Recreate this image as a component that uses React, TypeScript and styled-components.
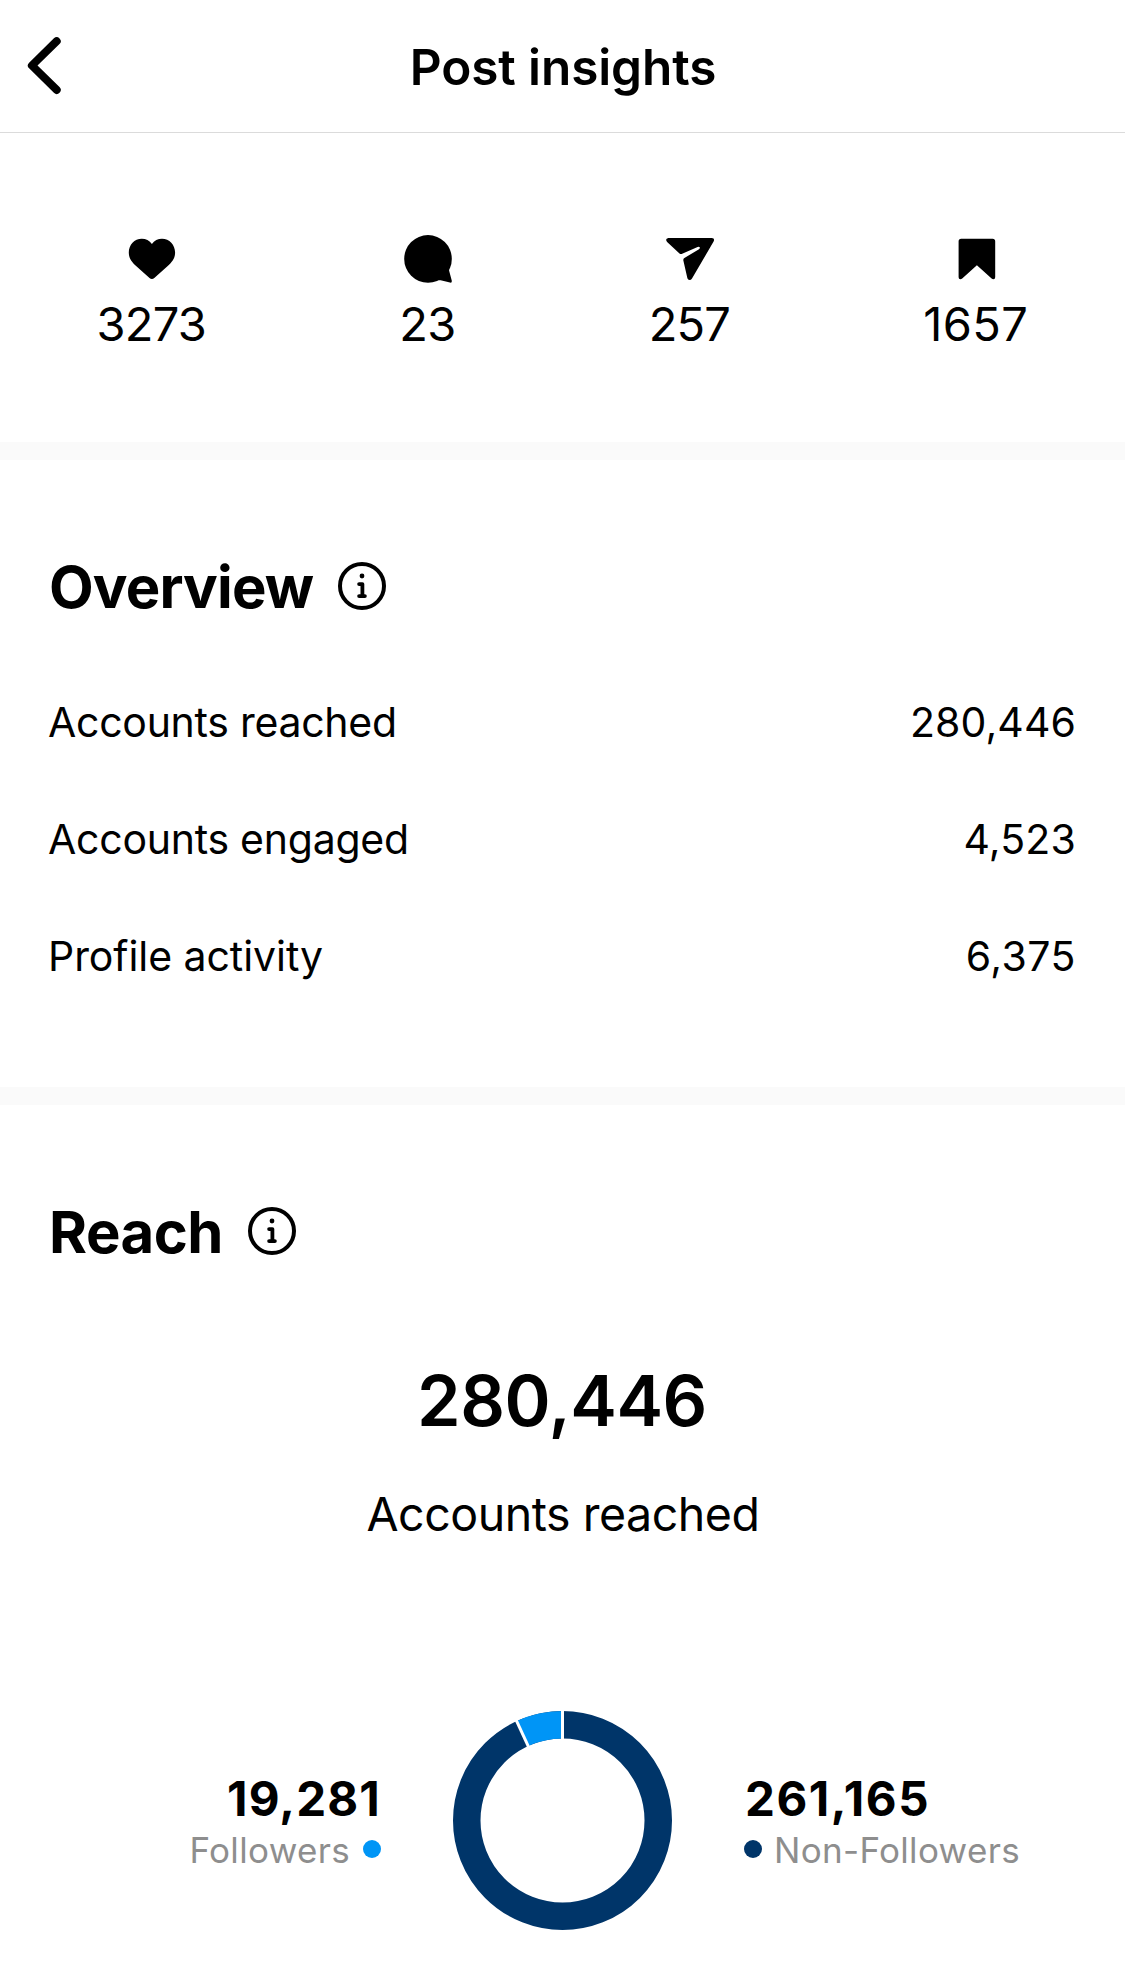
import React from 'react';
import styled, { createGlobalStyle } from 'styled-components';

const GlobalStyle = createGlobalStyle`
  *, *::before, *::after { box-sizing: border-box; }
  body {
    margin: 0;
    background: #fff;
    color: #000;
    font-family: Inter, "Liberation Sans", sans-serif;
  }
`;

const Screen = styled.main`
  display: flex;
  flex-direction: column;
  min-height: 1988px;
  background: #fff;
`;

const Header = styled.header`
  display: grid;
  grid-template-columns: 100px 1fr 100px;
  align-items: center;
  height: 133px;
  border-bottom: 1px solid #dbdbdb;
`;

const BackButton = styled.button`
  display: flex;
  align-items: center;
  padding: 0 0 0 24px;
  border: 0;
  background: none;
  color: inherit;
`;

const PageTitle = styled.h1`
  margin: 0;
  padding: 2px 0 0 1px;
  font-size: 49.5px;
  font-weight: 600;
  line-height: 60px;
  letter-spacing: -0.1px;
  text-align: center;
`;

const Stats = styled.section`
  display: flex;
  justify-content: space-around;
  height: 309px;
  padding-top: 102px;
`;

const Stat = styled.div`
  display: flex;
  flex-direction: column;
  align-items: center;
  gap: 17px;
`;

const StatValue = styled.span<{ $tracking: number }>`
  font-size: 47px;
  line-height: 48px;
  letter-spacing: ${p => p.$tracking}px;
`;

const Icon = styled.svg<{ $size?: number }>`
  display: block;
  flex: none;
  width: ${p => p.$size ?? 48}px;
  height: ${p => p.$size ?? 48}px;
  overflow: visible;
`;

const Divider = styled.div`
  height: 18px;
  background: #fafafa;
`;

const Section = styled.section<{ $bottom?: number }>`
  display: flex;
  flex-direction: column;
  padding: 96px 48px ${p => p.$bottom ?? 0}px 49px;
`;

const SectionHeader = styled.div`
  display: flex;
  align-items: center;
  gap: 25px;
  height: 60px;
`;

const SectionTitle = styled.h2<{ $tracking: number }>`
  margin: 0;
  padding-top: 2px;
  font-size: 58px;
  font-weight: 700;
  line-height: 60px;
  letter-spacing: ${p => p.$tracking}px;
`;

const MetricList = styled.dl`
  margin: 47px 1px 0 -1px;
`;

const Metric = styled.div`
  display: flex;
  align-items: center;
  justify-content: space-between;
  height: 117px;
  font-size: 41px;
  line-height: 50px;
`;

const MetricLabel = styled.dt<{ $tracking: number }>`
  letter-spacing: ${p => p.$tracking}px;
`;

const MetricValue = styled.dd<{ $tracking: number }>`
  margin: 0;
  letter-spacing: ${p => p.$tracking}px;
`;

const Total = styled.div`
  display: flex;
  flex-direction: column;
  align-items: center;
  gap: 43px;
  padding-top: 100px;
`;

const TotalValue = styled.strong`
  padding-right: 2px;
  font-size: 70px;
  font-weight: 600;
  line-height: 80px;
  letter-spacing: -0.45px;
`;

const TotalLabel = styled.span`
  font-size: 46.5px;
  line-height: 60px;
  letter-spacing: -0.47px;
`;

const Breakdown = styled.section`
  display: grid;
  grid-template-columns: 381px 219px 1fr;
  column-gap: 72px;
  align-items: center;
  margin-top: 167px;
`;

const Audience = styled.div<{ $align: 'flex-start' | 'flex-end' }>`
  display: flex;
  flex-direction: column;
  align-items: ${p => p.$align};
  gap: 6px;
  padding-top: 3px;
`;

const AudienceValue = styled.strong<{ $tracking: number; $inset?: number }>`
  padding-left: ${p => p.$inset ?? 0}px;
  font-size: 47.5px;
  font-weight: 700;
  line-height: 50px;
  letter-spacing: ${p => p.$tracking}px;
`;

const AudienceLabel = styled.div<{ $gap: number }>`
  display: flex;
  align-items: center;
  gap: ${p => p.$gap}px;
  color: #8e8e8e;
  font-size: 35px;
  line-height: 40px;
  letter-spacing: 0.32px;
`;

const Dot = styled.i<{ $color: string }>`
  width: 18px;
  height: 18px;
  margin-bottom: 2px;
  border-radius: 50%;
  background: ${p => p.$color};
`;

const BLUE = '#0095f6';
const NAVY = '#003569';

const HeartIcon = () => (
  <Icon viewBox="0 0 48 48">
    <path d="M24.9 9C27.2 5.6 31 3.7 35 3.7C42.4 3.7 48.1 9.7 48.1 17.6C48.1 23.5 45 27 41 30.7L27.3 43C25.9 44.3 23.9 44.3 22.5 43L8.8 30.7C4.9 27 1.8 23.5 1.8 17.6C1.8 9.7 7.4 3.7 14.8 3.7C18.8 3.7 22.6 5.6 24.9 9Z" />
  </Icon>
);

const CommentIcon = () => (
  <Icon viewBox="-0.6 0 48 48">
    <circle cx="24.4" cy="23.9" r="23.8" />
    <path d="M45.7 34.4Q45.3 35 45.6 36L48.2 45.8Q48.6 48 46.4 47.6L37 45.3Q36 45 35 45.3L28 30Z" />
  </Icon>
);

const SendIcon = () => (
  <Icon viewBox="-0.6 0 48 48">
    <path d="M2.7 3H46.2Q49.6 3.3 48 6.6L26.4 43.4Q25.5 45 24 45Q22.2 44.9 21.8 43.2L17.7 25.2Q17.6 23.7 18.8 23L33.4 14.2Q34.7 13.2 34.1 12.2Q33.4 11.4 32 12L16 18.9Q14.8 19.3 13.9 18.4L1.5 7Q-.9 3.9 2.7 3Z" />
  </Icon>
);

const BookmarkIcon = () => (
  <Icon viewBox="0 0 48 48">
    <path d="M9.2 3.7H40.6Q43.2 3.7 43.2 6.3V42.2Q43.2 44.2 41.4 44.2Q40.4 44.2 39.6 43.5L24.9 30.3L10.2 43.5Q9.4 44.2 8.4 44.2Q6.6 44.2 6.6 42.2V6.3Q6.6 3.7 9.2 3.7Z" />
  </Icon>
);

const InfoIcon = () => (
  <Icon viewBox="0 0 48 48" fill="none" stroke="#000" strokeLinecap="round" strokeLinejoin="round">
    <circle cx="24" cy="24" r="22" strokeWidth="4" />
    <circle cx="24" cy="14" r="2.4" fill="#000" stroke="none" />
    <path d="M21.1 22.1H24.4V34.1M21.1 34.1H26.9" strokeWidth="3.8" />
  </Icon>
);

const RADIUS = 95.75;
const polar = (r: number, deg: number) => {
  const a = ((deg - 90) * Math.PI) / 180;
  return `${109.5 + r * Math.cos(a)} ${109.5 + r * Math.sin(a)}`;
};

function Donut({ followers, others }: { followers: number; others: number }) {
  const split = 360 - (followers / (followers + others)) * 360;
  return (
    <Icon $size={219} viewBox="0 0 219 219" fill="none">
      <circle cx="109.5" cy="109.5" r={RADIUS} stroke={NAVY} strokeWidth="27.5" />
      <path
        d={`M${polar(RADIUS, split)}A${RADIUS} ${RADIUS} 0 0 1 ${polar(RADIUS, 360)}`}
        stroke={BLUE}
        strokeWidth="27.5"
      />
      <path d={`M${polar(80, split)}L${polar(112, split)}`} stroke="#fff" strokeWidth="3" />
      <path d={`M${polar(80, 0)}L${polar(112, 0)}`} stroke="#fff" strokeWidth="3" />
    </Icon>
  );
}

const stats = [
  { icon: <HeartIcon />, value: '3273', tracking: -0.75 },
  { icon: <CommentIcon />, value: '23', tracking: -0.66 },
  { icon: <SendIcon />, value: '257', tracking: -0.87 },
  { icon: <BookmarkIcon />, value: '1657', tracking: 0.45 },
];

const metrics = [
  { label: 'Accounts reached', value: '280,446', labelTracking: -0.27, valueTracking: 0.09 },
  { label: 'Accounts engaged', value: '4,523', labelTracking: -0.25, valueTracking: 0.18 },
  { label: 'Profile activity', value: '6,375', labelTracking: -0.06, valueTracking: 0.5 },
];

export default function App() {
  return (
    <>
      <GlobalStyle />
      <Screen>
        <Header>
          <BackButton aria-label="Back">
            <Icon $size={64} viewBox="0 0 64 64" fill="none">
              <path
                d="M32.7 7.2L7.9 31.5L32.7 55.9"
                stroke="#000"
                strokeWidth="8"
                strokeLinecap="round"
                strokeLinejoin="round"
              />
            </Icon>
          </BackButton>
          <PageTitle>Post insights</PageTitle>
        </Header>

        <Stats>
          {stats.map(s => (
            <Stat key={s.value}>
              {s.icon}
              <StatValue $tracking={s.tracking}>{s.value}</StatValue>
            </Stat>
          ))}
        </Stats>

        <Divider />

        <Section $bottom={73}>
          <SectionHeader>
            <SectionTitle $tracking={-0.85}>Overview</SectionTitle>
            <InfoIcon />
          </SectionHeader>
          <MetricList>
            {metrics.map(m => (
              <Metric key={m.label}>
                <MetricLabel $tracking={m.labelTracking}>{m.label}</MetricLabel>
                <MetricValue $tracking={m.valueTracking}>{m.value}</MetricValue>
              </Metric>
            ))}
          </MetricList>
        </Section>

        <Divider />

        <Section>
          <SectionHeader>
            <SectionTitle $tracking={-0.5}>Reach</SectionTitle>
            <InfoIcon />
          </SectionHeader>
          <Total>
            <TotalValue>280,446</TotalValue>
            <TotalLabel>Accounts reached</TotalLabel>
          </Total>
        </Section>

        <Breakdown>
          <Audience $align="flex-end">
            <AudienceValue $tracking={1.14}>19,281</AudienceValue>
            <AudienceLabel $gap={13}>
              Followers
              <Dot $color={BLUE} />
            </AudienceLabel>
          </Audience>
          <Donut followers={19281} others={261165} />
          <Audience $align="flex-start">
            <AudienceValue $tracking={1.5} $inset={1}>261,165</AudienceValue>
            <AudienceLabel $gap={12}>
              <Dot $color={NAVY} />
              Non-Followers
            </AudienceLabel>
          </Audience>
        </Breakdown>
      </Screen>
    </>
  );
}
